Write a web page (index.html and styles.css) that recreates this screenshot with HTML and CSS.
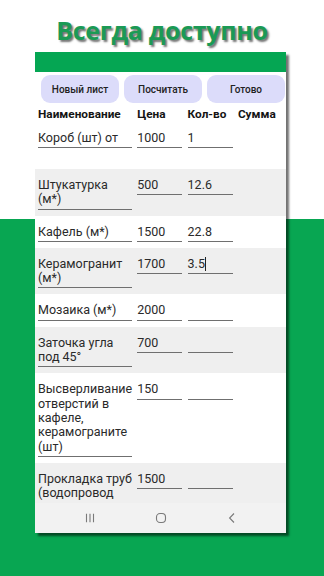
FILE: index.html
```html
<!DOCTYPE html>
<html lang="ru">
<head>
<meta charset="utf-8">
<title>Всегда доступно</title>
<link rel="stylesheet" href="styles.css">
</head>
<body>
<div class="page">
  <h1 class="title">Всегда доступно</h1>
  <div class="phone">
    <div class="appbar"></div>
    <div class="content">
      <div class="buttons">
        <button class="btn">Новый лист</button>
        <button class="btn">Посчитать</button>
        <button class="btn">Готово</button>
      </div>
      <div class="table">
        <div class="row head">
          <div>Наименование</div><div>Цена</div><div>Кол-во</div><div>Сумма</div>
        </div>
        <div class="row first">
          <div class="cell name">Короб (шт) от</div>
          <div class="cell">1000</div>
          <div class="cell">1</div>
        </div>
        <div class="row alt">
          <div class="cell name">Штукатурка<br>(м*)</div>
          <div class="cell">500</div>
          <div class="cell">12.6</div>
        </div>
        <div class="row">
          <div class="cell name">Кафель (м*)</div>
          <div class="cell">1500</div>
          <div class="cell">22.8</div>
        </div>
        <div class="row alt">
          <div class="cell name">Керамогранит<br>(м*)</div>
          <div class="cell">1700</div>
          <div class="cell">3.5<span class="caret"></span></div>
        </div>
        <div class="row">
          <div class="cell name">Мозаика (м*)</div>
          <div class="cell">2000</div>
          <div class="cell"></div>
        </div>
        <div class="row alt">
          <div class="cell name">Заточка угла<br>под 45°</div>
          <div class="cell">700</div>
          <div class="cell"></div>
        </div>
        <div class="row">
          <div class="cell name">Высверливание<br>отверстий в<br>кафеле,<br>керамограните<br>(шт)</div>
          <div class="cell">150</div>
          <div class="cell"></div>
        </div>
        <div class="row alt last">
          <div class="cell name">Прокладка труб<br>(водопровод</div>
          <div class="cell">1500</div>
          <div class="cell"></div>
        </div>
      </div>
    </div>
    <div class="navbar">
      <svg class="nav-icon" width="12" height="12" viewBox="0 0 12 12"><path d="M2.5 1.8v8.4M6 1.8v8.4M9.5 1.8v8.4" stroke="#7a7a7a" stroke-width="1.1" fill="none"/></svg>
      <svg class="nav-icon" width="12" height="12" viewBox="0 0 12 12"><rect x="1.5" y="1.5" width="9" height="9" rx="3.5" stroke="#7a7a7a" stroke-width="1.1" fill="none"/></svg>
      <svg class="nav-icon" width="12" height="12" viewBox="0 0 12 12"><path d="M8 1.5 3.6 6 8 10.5" stroke="#7a7a7a" stroke-width="1.1" fill="none"/></svg>
    </div>
  </div>
</div>
</body>
</html>
```

FILE: styles.css
```css
* { box-sizing: border-box; }
html, body { margin: 0; padding: 0; }
body {
  width: 324px;
  height: 576px;
  overflow: hidden;
  font-family: Roboto, "Noto Sans", sans-serif;
}
.page {
  width: 324px;
  height: 576px;
  background: linear-gradient(#ffffff 0, #ffffff 219px, #08a652 219px, #08a652 100%);
  padding-top: 14px;
}
.title {
  margin: 0;
  height: 38px;
  text-align: center;
  font-family: "Open Sans", sans-serif;
  font-weight: 700;
  font-size: 25px;
  line-height: 32px;
  letter-spacing: -0.3px;
  color: #1b9a55;
  text-shadow: 2px 2px 2px rgba(0, 0, 0, 0.55);
}
.phone {
  margin-left: 35px;
  width: 251px;
  height: 481px;
  background: #ffffff;
  box-shadow: 3px 3px 2px rgba(0, 0, 0, 0.55);
  display: flex;
  flex-direction: column;
  overflow: hidden;
}
.appbar {
  height: 20px;
  background: #05a653;
  flex: none;
}
.content {
  flex: 1;
  overflow: hidden;
}
.buttons {
  display: flex;
  gap: 5px;
  padding: 3px 0 4px 6px;
}
.btn {
  flex: none;
  width: 78px;
  height: 28px;
  border: 0;
  border-radius: 9px;
  background: #dcdcfa;
  font-family: Roboto, sans-serif;
  font-size: 10px;
  font-weight: 500;
  color: #222;
  padding: 0;
}
.table { color: #2a2a2a; }
.row {
  display: grid;
  grid-template-columns: 94px 45px 45px 1fr;
  column-gap: 5.3px;
  padding: 9px 0 6px 3px;
  align-items: start;
  font-size: 12.5px;
  line-height: 14.3px;
}
.row.head {
  padding: 0 0 0 3px;
  height: 15px;
  font-size: 11.8px;
  font-weight: 700;
  line-height: 15px;
  color: #141414;
}
.row.first { height: 47px; }
.row.alt { background: #efefef; }
.row.last .name { border-bottom: 0; }
.cell {
  white-space: nowrap;
  padding-bottom: 2px;
  border-bottom: 1px solid #6f6f6f;
  min-height: 17.3px;
}
.caret {
  display: inline-block;
  width: 0;
  height: 14px;
  border-left: 1.3px solid #222;
  vertical-align: -3px;
}
.navbar {
  flex: none;
  height: 30px;
  background: #f2f2f2;
  display: flex;
  align-items: center;
  justify-content: space-between;
  padding: 0 48px 0 49px;
}
.nav-icon { display: block; }
```
